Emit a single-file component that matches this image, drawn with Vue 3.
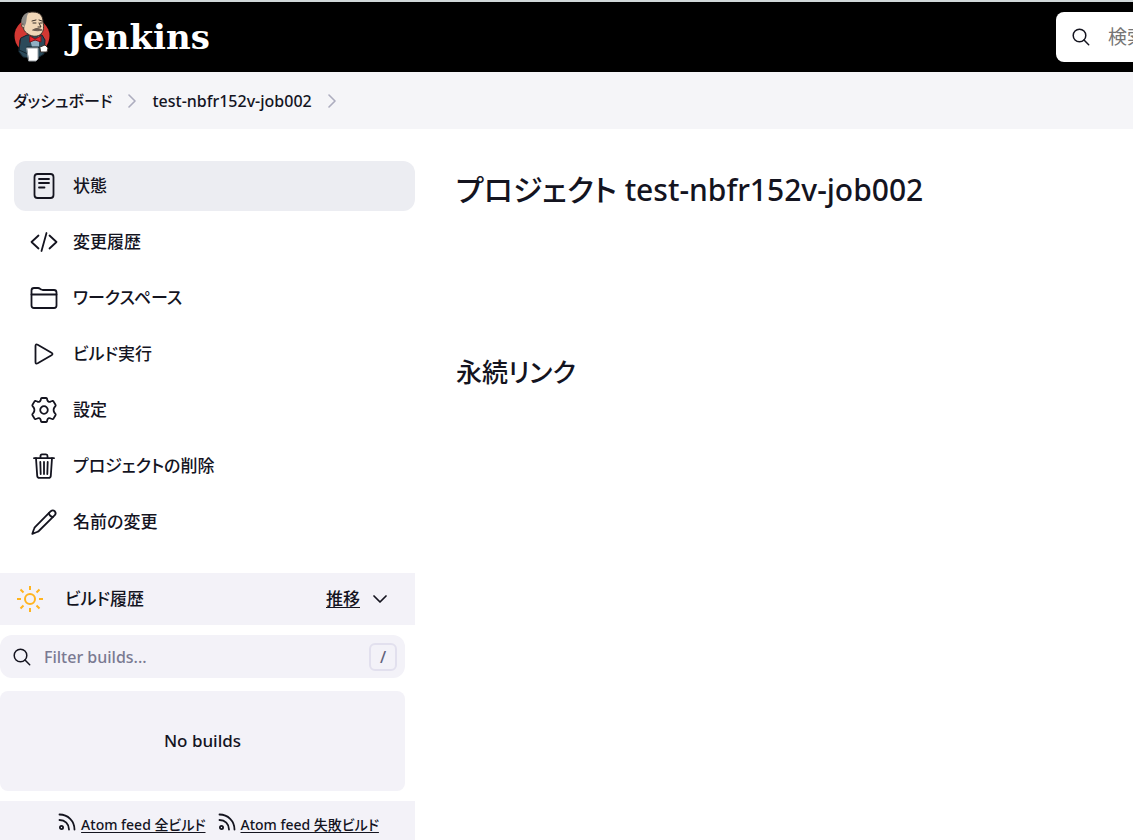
<template>
  <div class="page">
    <header class="header">
      <a class="brand" href="#">
        <svg class="mascot" viewBox="0 0 36 52" aria-hidden="true">
          <circle cx="18" cy="25" r="17.5" fill="#d33833" stroke="none" />
          <path d="M7 27 L13 24 L28 24 L31 29 L30 43 L22 48 L9 46 L5 41 Z" fill="#2b4a5a" stroke="#14222b" />
          <path d="M15 24 L20 30 L25 25 L25 36 L18 36 Z" fill="#8fb0c4" stroke="none" />
          <path d="M8 9 C9 3 14 1 19 1 C26 1 29 5 29 11 C30 15 30 20 27 23 C24 26 18 26 14 23 C10 21 8 16 8 9 Z" fill="#f0d6b7" stroke="#3b302a" />
          <path d="M8 15 C6 8 9 3 15 1 C12 5 13 9 12 12 L10 17 Z" fill="#8b8985" stroke="none" />
          <path d="M9 13 C7 12 7 17 10 17" fill="#f0d6b7" stroke="#3b302a" />
          <path d="M18 10 L22 9 M25 9 L28 10 M19 12 L22 12 M26 12 L28 12 M25 12 L27 16 L24 16" fill="none" stroke="#3b302a" />
          <path d="M19 19 C21 17 25 17 28 19 C25 20 22 20 19 19 Z" fill="#6b5a50" stroke="#6b5a50" />
          <path d="M16 25 L21 28 L27 25 L27 31 L21 29 L16 31 Z" fill="#e8262d" stroke="#7c1418" />
          <path d="M6 29 L5 39 L14 43 M13 36 L25 36" fill="none" stroke="#14222b" />
          <path d="M13 37 L24 37 L24 48 L22 50 L15 50 Z" fill="#fff" stroke="#9aa0a5" />
          <path d="M26 36 L31 34 L34 37 L33 41 L27 41 Z" fill="#fff" stroke="#3b302a" />
        </svg>
        <span class="brand-name">Jenkins</span>
      </a>
      <label class="search">
        <svg class="icon-search" viewBox="0 0 18 18" aria-hidden="true">
          <circle cx="7.5" cy="7.5" r="6.3" />
          <path d="M12 12 L16.7 16.7" />
        </svg>
        <input v-model="query" type="text" placeholder="検索" aria-label="検索" />
      </label>
    </header>

    <nav class="breadcrumbs">
      <template v-for="crumb in crumbs" :key="crumb">
        <a href="#">{{ crumb }}</a>
        <svg class="crumb-arrow" viewBox="0 0 8 14" aria-hidden="true"><path d="M1 1 L7 7 L1 13" /></svg>
      </template>
    </nav>

    <div class="body">
      <aside class="side">
        <nav class="tasks">
          <a
            v-for="task in tasks"
            :key="task.label"
            href="#"
            class="task"
            :class="{ active: task.label === current }"
            @click.prevent="current = task.label"
          >
            <svg class="task-icon" viewBox="0 0 28 28" aria-hidden="true">
              <path v-for="d in task.paths" :key="d" :d="d" />
            </svg>
            <span>{{ task.label }}</span>
          </a>
        </nav>

        <section class="history">
          <div class="history-head">
            <svg class="sun" viewBox="0 0 28 28" aria-hidden="true">
              <circle cx="14" cy="14" r="5" />
              <path d="M14 1 V5 M14 23 V27 M1 14 H5 M23 14 H27 M4.5 4.5 L7.5 7.5 M20.5 20.5 L23.5 23.5 M4.5 23.5 L7.5 20.5 M20.5 7.5 L23.5 4.5" />
            </svg>
            <span class="history-title">ビルド履歴</span>
            <a href="#" class="trend">
              <span>推移</span>
              <svg viewBox="0 0 14 8" aria-hidden="true"><path d="M1 1 L7 7 L13 1" /></svg>
            </a>
          </div>

          <label class="filter">
            <svg class="icon-search" viewBox="0 0 18 18" aria-hidden="true">
              <circle cx="7.5" cy="7.5" r="6.3" />
              <path d="M12 12 L16.7 16.7" />
            </svg>
            <input v-model="filter" type="text" placeholder="Filter builds..." aria-label="Filter builds..." />
            <kbd>/</kbd>
          </label>

          <div class="empty">No builds</div>

          <div class="feeds">
            <a v-for="feed in feeds" :key="feed" href="#">
              <svg viewBox="0 0 18 18" aria-hidden="true">
                <circle cx="3.5" cy="14.5" r="1.6" />
                <path d="M1.5 1.5 C10 1.5 16.5 8 16.5 16.5 M1.5 7 C7 7 11 11 11 16.5" />
              </svg>
              <span>{{ feed }}</span>
            </a>
          </div>
        </section>
      </aside>

      <main class="main">
        <h1>プロジェクト test-nbfr152v-job002</h1>
        <h2>永続リンク</h2>
      </main>
    </div>
  </div>
</template>

<script setup>
import { ref } from 'vue'

const query = ref('')
const filter = ref('')
const current = ref('状態')

const crumbs = ['ダッシュボード', 'test-nbfr152v-job002']
const feeds = ['Atom feed 全ビルド', 'Atom feed 失敗ビルド']

const tasks = [
  {
    label: '状態',
    paths: [
      'M7.5 2 H20.5 Q23.5 2 23.5 5 V23 Q23.5 26 20.5 26 H7.5 Q4.5 26 4.5 23 V5 Q4.5 2 7.5 2 Z',
      'M9 7 H19',
      'M9 11 H19',
      'M9 15.5 H14.5',
    ],
  },
  { label: '変更履歴', paths: ['M8.5 7.5 L1.5 14 L8.5 20.5', 'M19.5 7.5 L26.5 14 L19.5 20.5', 'M16.5 5 L11.5 23'] },
  {
    label: 'ワークスペース',
    paths: [
      'M1.5 21.5 V6.5 Q1.5 4 4 4 H8 Q9.2 4 10 4.7 L11 5.4 Q11.8 6 13 6 H24 Q26.5 6 26.5 8.5 V21.5 Q26.5 24 24 24 H4 Q1.5 24 1.5 21.5 Z',
      'M1.5 10.5 H26.5',
    ],
  },
  { label: 'ビルド実行', paths: ['M5.5 6 V22 Q5.5 24.5 7.7 23.3 L21.5 15.3 Q23.5 14 21.5 12.7 L7.7 4.7 Q5.5 3.5 5.5 6 Z'] },
  {
    label: '設定',
    paths: [
      'M10.6 4.4 L11 2.7 Q11.3 2 12.2 2 H15.8 Q16.7 2 17 2.7 L17.4 4.4 Q17.8 5.4 18.9 5.8 Q19.8 6.1 20.7 5.5 L22.2 5 Q23.1 4.8 23.6 5.6 L25.5 8.8 Q26 9.7 25.3 10.4 L24.4 11.4 Q23.6 12.5 23.6 14 Q23.6 15.5 24.4 16.6 L25.3 17.6 Q26 18.3 25.5 19.2 L23.6 22.4 Q23.1 23.2 22.2 23 L20.7 22.5 Q19.8 21.9 18.9 22.2 Q17.8 22.6 17.4 23.6 L17 25.3 Q16.7 26 15.8 26 H12.2 Q11.3 26 11 25.3 L10.6 23.6 Q10.2 22.6 9.1 22.2 Q8.2 21.9 7.3 22.5 L5.8 23 Q4.9 23.2 4.4 22.4 L2.5 19.2 Q2 18.3 2.7 17.6 L3.6 16.6 Q4.4 15.5 4.4 14 Q4.4 12.5 3.6 11.4 L2.7 10.4 Q2 9.7 2.5 8.8 L4.4 5.6 Q4.9 4.8 5.8 5 L7.3 5.5 Q8.2 6.1 9.1 5.8 Q10.2 5.4 10.6 4.4 Z',
      'M10.2 14 A3.8 3.8 0 1 0 17.8 14 A3.8 3.8 0 1 0 10.2 14 Z',
    ],
  },
  {
    label: 'プロジェクトの削除',
    paths: [
      'M4 6.2 H24',
      'M6 6.2 L7.2 23.8 Q7.4 25.8 9.4 25.8 H18.6 Q20.6 25.8 20.8 23.8 L22 6.2',
      'M10.5 6.2 V4 Q10.5 2.4 12 2.4 H16 Q17.5 2.4 17.5 4 V6.2',
      'M14 10 V22',
      'M10.3 10 L10.7 22',
      'M17.7 10 L17.3 22',
    ],
  },
  {
    label: '名前の変更',
    paths: [
      'M18.8 5.2 L5 19.2 Q4.3 20 4 21 L2.3 25.8 L7 24 Q8 23.7 8.8 23 L22.8 9.2',
      'M18.8 5.2 L20.8 3.2 Q22.8 1.6 24.8 3.3 Q26.5 5.2 24.8 7.2 L22.8 9.2 Q19.8 8.6 18.8 5.2 Z',
    ],
  },
]
</script>

<style>
body {
  margin: 0;
  background: #fff;
}
</style>

<style scoped>
.page {
  font-family: "Noto Sans", "Noto Sans CJK JP", sans-serif;
  font-size: 17px;
  font-weight: 500;
  line-height: 24px;
  font-feature-settings: "palt";
  color: #14141f;
  min-height: 100vh;
  display: flex;
  flex-direction: column;
  overflow: hidden;
}

a {
  color: inherit;
  text-decoration: none;
}

svg {
  flex: none;
  fill: none;
  stroke: currentColor;
  stroke-linecap: round;
  stroke-linejoin: round;
}

input {
  flex: 1;
  min-width: 0;
  padding: 0;
  border: 0;
  outline: 0;
  background: none;
  color: inherit;
  font: inherit;
}

.header {
  display: flex;
  align-items: center;
  justify-content: space-between;
  height: 70px;
  padding-left: 14px;
  border-top: 2px solid #d0d7d9;
  background: #000;
}

.brand {
  display: flex;
  align-items: center;
  gap: 17px;
  color: #fff;
}

.mascot {
  width: 36px;
  height: 52px;
}

.brand-name {
  font-family: "DejaVu Serif", serif;
  font-size: 34px;
  font-weight: 700;
  line-height: 40px;
}

.search {
  display: flex;
  align-items: center;
  gap: 18px;
  width: 61px;
  height: 50px;
  padding-left: 16px;
  border-radius: 8px 0 0 8px;
  background: #fff;
}

.search input {
  font-size: 19px;
  font-weight: 400;
}

.search input::placeholder {
  color: #757575;
}

.icon-search {
  width: 18px;
  height: 18px;
  stroke-width: 1.5;
}

.breadcrumbs {
  display: flex;
  align-items: center;
  gap: 16px;
  height: 57px;
  padding: 0 13px;
  background: #f5f5f8;
  font-size: 16px;
}

.crumb-arrow {
  width: 8px;
  height: 14px;
  color: #adadbf;
  stroke-width: 1.6;
}

.body {
  flex: 1;
  display: flex;
  gap: 41px;
}

.side {
  flex: none;
  width: 415px;
  padding-top: 32px;
  display: flex;
  flex-direction: column;
  gap: 26px;
}

.tasks {
  display: flex;
  flex-direction: column;
  gap: 6px;
  padding-left: 14px;
}

.task {
  display: flex;
  align-items: center;
  gap: 15px;
  height: 50px;
  padding: 0 16px;
  border-radius: 12px;
}

.task.active {
  background: #ecedf2;
}

.task-icon {
  width: 28px;
  height: 28px;
  stroke-width: 1.8;
}

.history {
  flex: 1;
  display: flex;
  flex-direction: column;
}

.history-head {
  display: flex;
  align-items: center;
  height: 52px;
  padding: 0 28px 0 16px;
  background: #f3f2f8;
}

.sun {
  width: 28px;
  height: 28px;
  color: #ffb41f;
  stroke-width: 2;
  stroke-linecap: butt;
}

.history-title {
  margin-left: 21px;
}

.trend {
  display: flex;
  align-items: center;
  gap: 13px;
  margin-left: auto;
}

.trend span,
.feeds span {
  text-decoration: underline;
  text-underline-offset: 2px;
}

.trend svg {
  width: 14px;
  height: 8px;
  stroke-width: 1.7;
}

.filter {
  display: flex;
  align-items: center;
  gap: 13px;
  height: 43px;
  margin: 10px 10px 13px 0;
  padding: 0 8px 0 13px;
  border-radius: 12px;
  background: #f3f2f8;
  font-size: 16px;
}

.filter input::placeholder {
  color: #7a7a92;
}

.filter kbd {
  width: 24px;
  border: 2px solid #e2e0ee;
  border-radius: 6px;
  color: #62627a;
  font-family: inherit;
  font-size: 16px;
  text-align: center;
}

.empty {
  display: flex;
  align-items: center;
  justify-content: center;
  height: 100px;
  margin-right: 10px;
  border-radius: 8px;
  background: #f3f2f8;
}

.feeds {
  flex: 1;
  display: flex;
  justify-content: center;
  gap: 12px;
  margin-top: 10px;
  padding: 12px 0 3px 22px;
  background: #f3f2f8;
  font-size: 14px;
}

.feeds a {
  display: flex;
  gap: 5px;
}

.feeds svg {
  width: 18px;
  height: 18px;
  stroke-width: 1.8;
}

.main {
  flex: 1;
  min-width: 0;
  padding-top: 40px;
}

h1,
h2 {
  margin: 0;
  font-weight: 500;
}

h1 {
  font-size: 30px;
  line-height: 42px;
}

h2 {
  margin-top: 142px;
  font-size: 26px;
  line-height: 38px;
}
</style>
